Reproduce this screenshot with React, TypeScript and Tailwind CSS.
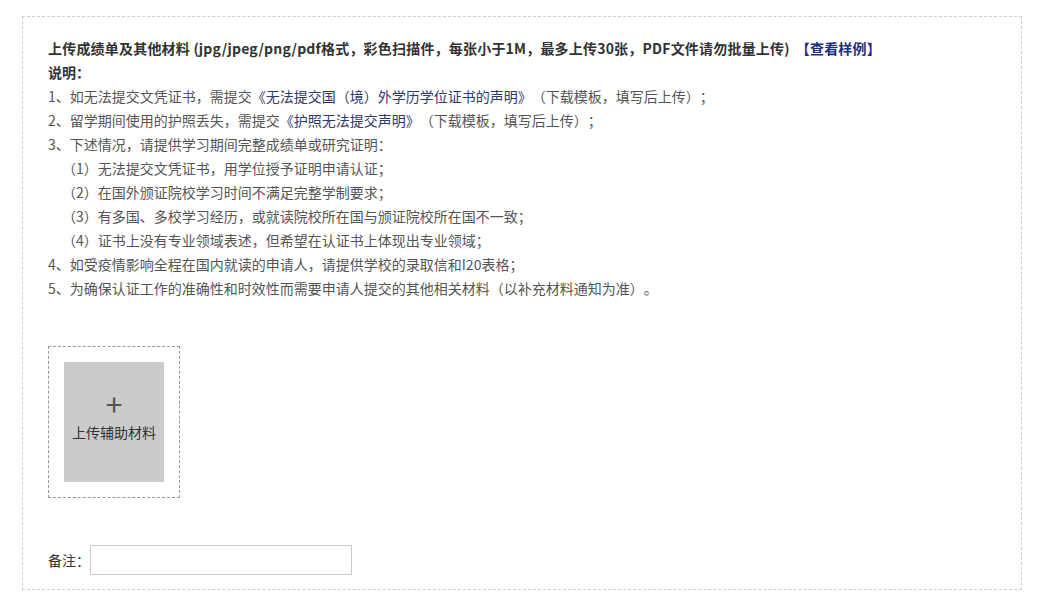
import React from "react";

const font = { fontFamily: '"Noto Sans CJK SC", "Noto Sans", sans-serif' };

export default function App() {
  return (
    <div className="w-[1041px] h-[605px] bg-white pt-[16px] pl-[22px] [text-spacing-trim:space-all]" style={font}>
      <div className="w-[1000px] h-[574px] border border-dashed border-[#cfcfcf] pt-[19px] pl-[25px]">
        <div className="text-[14px] leading-[24px] text-[#555]">
          <div className="font-bold text-[#333] tracking-[0.2px]">
            上传成绩单及其他材料 (jpg/jpeg/png/pdf格式，彩色扫描件，每张小于1M，最多上传30张，PDF文件请勿批量上传)
            <span className="text-[#1c2f7d] ml-[6px]">【查看样例】</span>
          </div>
          <div className="font-bold text-[#333]">说明：</div>
          <div>
            1、如无法提交文凭证书，需提交<span className="text-[#2d3a6b]">《无法提交国（境）外学历学位证书的声明》</span>（下载模板，填写后上传）；
          </div>
          <div>
            2、留学期间使用的护照丢失，需提交<span className="text-[#2d3a6b]">《护照无法提交声明》</span>（下载模板，填写后上传）；
          </div>
          <div>3、下述情况，请提供学习期间完整成绩单或研究证明：</div>
          <div className="pl-[14px]">（1）无法提交文凭证书，用学位授予证明申请认证；</div>
          <div className="pl-[14px]">（2）在国外颁证院校学习时间不满足完整学制要求；</div>
          <div className="pl-[14px]">（3）有多国、多校学习经历，或就读院校所在国与颁证院校所在国不一致；</div>
          <div className="pl-[14px]">（4）证书上没有专业领域表述，但希望在认证书上体现出专业领域；</div>
          <div>4、如受疫情影响全程在国内就读的申请人，请提供学校的录取信和I20表格；</div>
          <div>5、为确保认证工作的准确性和时效性而需要申请人提交的其他相关材料（以补充材料通知为准）。</div>
        </div>

        <div className="mt-[46px] w-[132px] h-[152px] border border-dashed border-[#999] p-[15px]">
          <div className="w-[100px] h-[120px] bg-[#cbcbcb] flex flex-col items-center pt-[25px]">
            <div className="text-[30px] leading-[32px] text-[#555]">+</div>
            <div className="text-[14px] text-[#333] mt-[3px]">上传辅助材料</div>
          </div>
        </div>

        <div className="mt-[47px] flex items-center">
          <span className="text-[14px] text-[#333]">备注：</span>
          <div className="w-[262px] h-[30px] border border-[#ccc] bg-white" />
        </div>
      </div>
    </div>
  );
}
